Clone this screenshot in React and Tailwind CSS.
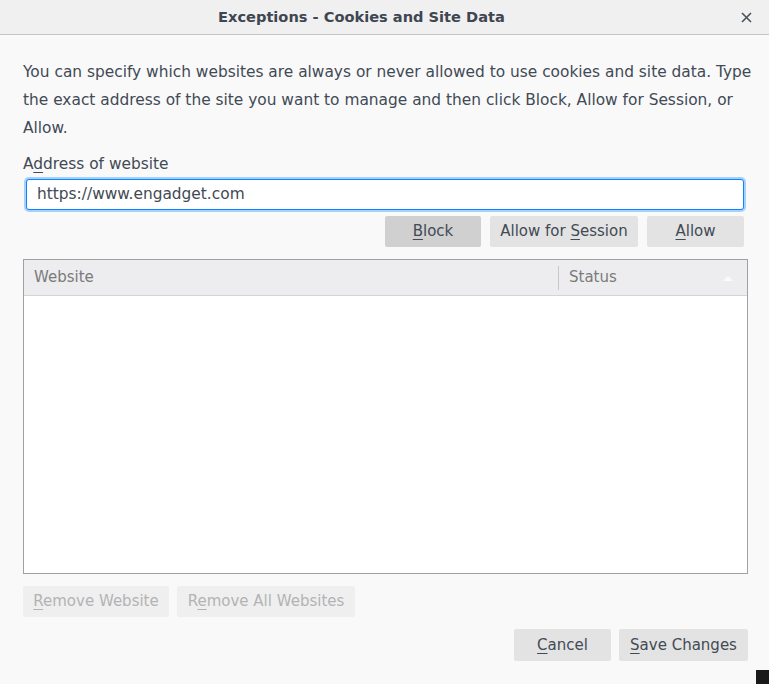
import React from "react";

const U = ({ children }) => <span className="underline underline-offset-[3px] decoration-1">{children}</span>;

function Btn({ children, className = "" }) {
  return (
    <button className={`rounded-[2px] flex items-center justify-center text-[15px] ${className}`}>
      <span className="whitespace-pre">{children}</span>
    </button>
  );
}

export default function App() {
  return (
    <div
      className="w-[769px] h-[684px] bg-[#f9f9fa] flex flex-col overflow-hidden relative text-[#424a55]"
      style={{ fontFamily: '"DejaVu Sans", "Liberation Sans", sans-serif' }}
    >
      <div className="h-[35px] shrink-0 bg-[#f0f0f0] border-b border-[#c6c6c6] flex items-center pl-[218px] relative">
        <span className="text-[14.6px] font-bold text-[#3e4652]">Exceptions - Cookies and Site Data</span>
        <svg className="absolute right-[17px] top-[12px]" width="11" height="11" viewBox="0 0 11 11">
          <path d="M1 1L10 10M10 1L1 10" stroke="#4a525c" strokeWidth="1.6" />
        </svg>
      </div>

      <div className="flex flex-col pl-[23px] pr-[21px] pt-[23px]">
        <p className="text-[15.4px] leading-[28px] whitespace-nowrap">
          You can specify which websites are always or never allowed to use cookies and site data. Type
          <br />
          the exact address of the site you want to manage and then click Block, Allow for Session, or
          <br />
          Allow.
        </p>
        <div className="mt-[12px] text-[15.4px] leading-[20px]">
          A<U>d</U>dress of website
        </div>
        <div className="mt-[5px] ml-[3px] mr-[4px] h-[31px] rounded-[3px] border border-[#0a84ff] bg-white flex items-center pl-[10px] text-[15.4px] shadow-[0_0_0_2px_#a6d1fb]">
          https://www.engadget.com
        </div>
        <div className="mt-[6px] flex justify-end gap-[9px] mr-[4px]">
          <Btn className="h-[31px] w-[96px] bg-[#d0d0d0]">
            <U>B</U>lock
          </Btn>
          <Btn className="h-[31px] w-[148px] bg-[#e3e3e3]">
            Allow for <U>S</U>ession
          </Btn>
          <Btn className="h-[31px] w-[97px] bg-[#e3e3e3]">
            <U>A</U>llow
          </Btn>
        </div>
        <div className="mt-[12px] h-[315px] border border-[#a0a0a0] bg-white flex flex-col">
          <div className="h-[36px] bg-[#ededf0] border-b border-[#d4d4d6] flex items-center text-[15px] text-[#7a7a7a]">
            <div className="w-[535px] pl-[10px] border-r border-[#c8c8c8] h-[24px] flex items-center">Website</div>
            <div className="flex-1 pl-[10px] flex items-center justify-between pr-[14px]">
              <span>Status</span>
              <svg width="10" height="6" viewBox="0 0 10 6">
                <path d="M0 6L5 1L10 6Z" fill="#fafafa" />
              </svg>
            </div>
          </div>
        </div>
        <div className="mt-[12px] flex gap-[8px]">
          <Btn className="h-[31px] w-[146px] bg-[#efefef] text-[#b3b3b5]">
            <U>R</U>emove Website
          </Btn>
          <Btn className="h-[31px] w-[178px] bg-[#efefef] text-[#b3b3b5]">
            R<U>e</U>move All Websites
          </Btn>
        </div>
        <div className="mt-[12px] flex justify-end gap-[8px]">
          <Btn className="h-[32px] w-[97px] bg-[#e3e3e3]">
            <U>C</U>ancel
          </Btn>
          <Btn className="h-[32px] w-[129px] bg-[#e3e3e3]">
            <U>S</U>ave Changes
          </Btn>
        </div>
      </div>
      <div className="absolute right-0 bottom-0 w-[13px] h-[14px] bg-[#1a1a1a]" />
    </div>
  );
}
